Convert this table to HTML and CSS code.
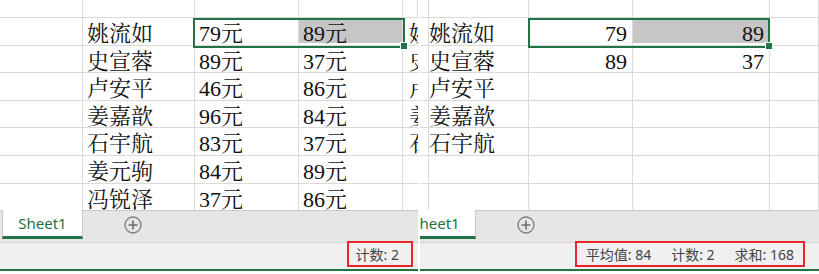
FILE: index.html
```html
<!DOCTYPE html>
<html lang="zh-CN">
<head>
    <meta charset="UTF-8">
    <meta name="viewport" content="width=device-width, initial-scale=1.0">
    <title>Sheet1 - 计数与求和</title>
    <link rel="stylesheet" href="styles.css">
</head>
<body>
<div class="screens">
    <!-- prices stored as text: only a count is shown -->
    <section class="window window-left">
        <div class="sheet sheet-left">
            <div class="cell"></div><div class="cell"></div><div class="cell"></div><div class="cell"></div><div class="cell"></div>

            <div class="cell"></div><div class="cell">姚流如</div><div class="cell">79元</div><div class="cell picked">89元</div><div class="cell edge">姚流如</div>
            <div class="cell"></div><div class="cell">史宣蓉</div><div class="cell">89元</div><div class="cell">37元</div><div class="cell edge">史宣蓉</div>
            <div class="cell"></div><div class="cell">卢安平</div><div class="cell">46元</div><div class="cell">86元</div><div class="cell edge">卢安平</div>
            <div class="cell"></div><div class="cell">姜嘉歆</div><div class="cell">96元</div><div class="cell">84元</div><div class="cell edge">姜嘉歆</div>
            <div class="cell"></div><div class="cell">石宇航</div><div class="cell">83元</div><div class="cell">37元</div><div class="cell edge">石宇航</div>
            <div class="cell"></div><div class="cell">姜元驹</div><div class="cell">84元</div><div class="cell">89元</div><div class="cell edge"></div>
            <div class="cell"></div><div class="cell">冯锐泽</div><div class="cell">37元</div><div class="cell">86元</div><div class="cell edge"></div>

            <div class="selection sel-left"><span class="handle"></span></div>
        </div>
        <div class="tabs">
            <div class="tab">Sheet1</div>
            <span class="add-sheet">
                <svg width="18" height="18" viewBox="0 0 18 18">
                    <circle cx="9" cy="9" r="8" fill="none" stroke="#7b7b7b" stroke-width="1.3"/>
                    <path d="M9 4.5v9M4.5 9h9" stroke="#6f6f6f" stroke-width="1.6"/>
                </svg>
            </span>
        </div>
        <div class="status">
            <div class="summary summary-left">计数: 2</div>
        </div>
    </section>

    <!-- same prices as numbers: average, count and sum -->
    <section class="window window-right">
        <div class="sheet sheet-right">
            <div class="cell"></div><div class="cell"></div><div class="cell"></div><div class="cell"></div><div class="cell"></div>

            <div class="cell"></div><div class="cell">姚流如</div><div class="cell num">79</div><div class="cell num picked">89</div><div class="cell"></div>
            <div class="cell"></div><div class="cell">史宣蓉</div><div class="cell num">89</div><div class="cell num">37</div><div class="cell"></div>
            <div class="cell"></div><div class="cell">卢安平</div><div class="cell"></div><div class="cell"></div><div class="cell"></div>
            <div class="cell"></div><div class="cell">姜嘉歆</div><div class="cell"></div><div class="cell"></div><div class="cell"></div>
            <div class="cell"></div><div class="cell">石宇航</div><div class="cell"></div><div class="cell"></div><div class="cell"></div>
            <div class="cell"></div><div class="cell"></div><div class="cell"></div><div class="cell"></div><div class="cell"></div>
            <div class="cell"></div><div class="cell"></div><div class="cell"></div><div class="cell"></div><div class="cell"></div>

            <div class="selection sel-right"><span class="handle"></span></div>
        </div>
        <div class="tabs">
            <div class="tab tab-scrolled">Sheet1</div>
            <span class="add-sheet">
                <svg width="18" height="18" viewBox="0 0 18 18">
                    <circle cx="9" cy="9" r="8" fill="none" stroke="#7b7b7b" stroke-width="1.3"/>
                    <path d="M9 4.5v9M4.5 9h9" stroke="#6f6f6f" stroke-width="1.6"/>
                </svg>
            </span>
        </div>
        <div class="status">
            <div class="summary summary-right">
                <span>平均值: 84</span>
                <span>计数: 2</span>
                <span>求和: 168</span>
            </div>
        </div>
    </section>
</div>
</body>
</html>
```

FILE: styles.css
```css
body {
    margin: 0;
    background: #fff;
}
.screens {
    display: flex;
    gap: 2px;
    height: 274px;
}
.window {
    display: flex;
    flex-direction: column;
    overflow: hidden;
    background: #fff;
}
.window-left {
    width: 418px;
}
.window-right {
    flex: 1;
}

/* grid */
.sheet {
    position: relative;
    height: 210px;
    overflow: hidden;
    display: grid;
    grid-template-rows: 18px repeat(7, 27.6px);
    align-content: start;
    font-family: "Liberation Serif", "Noto Serif CJK SC", "Noto Sans CJK SC", serif;
    font-size: 22px;
    color: #111;
}
.sheet-left {
    grid-template-columns: 83px 112px 104px 104px 1fr;
}
.sheet-right {
    grid-template-columns: 5px 104px 104px 137px 1fr;
}
.cell {
    min-width: 0;
    border-right: 1px solid #dadada;
    border-bottom: 1px solid #dadada;
    padding: 2px 4px 0;
    line-height: 27px;
    white-space: nowrap;
    overflow: hidden;
}
.edge {
    padding-left: 6px;
    padding-right: 0;
    border-right: none;
}
.num {
    text-align: right;
    padding-right: 5px;
}
.picked {
    background: #c6c6c6;
    box-shadow: inset 0 -2px 0 #fff;
}
.selection {
    position: absolute;
    top: 18px;
    height: 30px;
    box-sizing: border-box;
    border: 2px solid #217346;
}
.sel-left {
    left: 193px;
    width: 212px;
}
.sel-right {
    left: 108px;
    width: 242px;
}
.handle {
    position: absolute;
    right: -5px;
    bottom: -4px;
    width: 6px;
    height: 6px;
    background: #217346;
    border: 1px solid #fff;
}

/* sheet tabs */
.tabs {
    height: 33px;
    box-sizing: border-box;
    display: flex;
    align-items: flex-start;
    background: #e6e6e6;
    border-top: 1px solid #c8c8c8;
    border-bottom: 1px solid #d4d4d4;
}
.tab {
    margin: -1px 0 0 2px;
    width: 81px;
    height: 29px;
    box-sizing: border-box;
    display: flex;
    align-items: center;
    justify-content: center;
    background: #fff;
    border-left: 1px solid #c8c8c8;
    border-right: 1px solid #c8c8c8;
    border-bottom: 3px solid #217346;
    color: #217346;
    font-family: "Noto Sans", sans-serif;
    font-size: 15px;
}
.tab-scrolled {
    margin-left: -25px;
}
.add-sheet {
    margin: 5px 0 0 41px;
    width: 18px;
    height: 18px;
}
.add-sheet svg {
    display: block;
}

/* status bar */
.status {
    height: 26px;
    display: flex;
    justify-content: flex-end;
    background: #f0f0f0;
    border-bottom: 2px solid #217346;
    font-family: "Noto Sans", "Noto Sans CJK SC", sans-serif;
    font-size: 14px;
    color: #444;
}
.summary {
    align-self: flex-start;
    margin-top: -2px;
    height: 26px;
    box-sizing: border-box;
    display: flex;
    align-items: center;
    gap: 20px;
    border: 2px solid #e8262b;
}
.summary-left {
    margin-right: 5px;
    padding: 0 12px 0 7px;
}
.summary-right {
    margin-right: 14px;
    padding: 0 9px;
}
```
